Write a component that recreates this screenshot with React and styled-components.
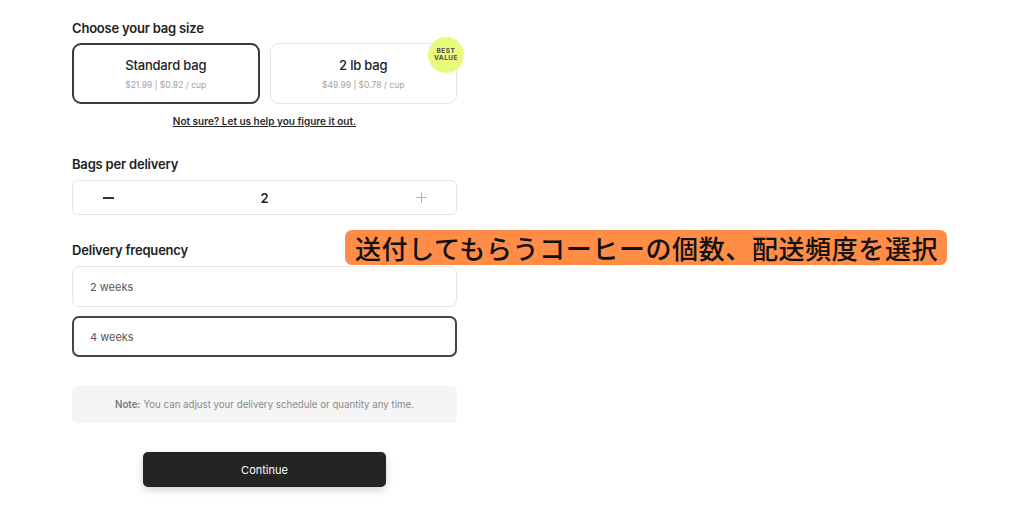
import React, { useState } from 'react'
import styled, { createGlobalStyle } from 'styled-components'

const GlobalStyle = createGlobalStyle`
    html, body {
        margin: 0;
        padding: 0;
        background: #fff;
    }
    body {
        font-family: Inter, "Noto Sans", sans-serif;
        color: #1f1f1f;
    }
`

const Page = styled.div`
    position: relative;
    width: 1024px;
    height: 507px;
    overflow: hidden;
`
const Form = styled.div`
    width: 385px;
    margin-left: 72px;
    padding-top: 19px;
    display: flex;
    flex-direction: column;
`
const Label = styled.div`
    font-size: 13px;
    line-height: 18px;
    font-weight: 600;
    letter-spacing: -0.2px;
    color: #222;
    margin-top: ${(props) => props.$top || 0}px;
    margin-bottom: ${(props) => props.$bottom || 7}px;
`
const SizeRow = styled.div`
    display: grid;
    grid-template-columns: 1fr 1fr;
    gap: 10px;
`
const SizeCard = styled.div`
    position: relative;
    box-sizing: border-box;
    height: 61px;
    border-radius: 9px;
    border: ${(props) => (props.$active ? '2px solid #3b3b3b' : '1px solid #e6e6e6')};
    display: flex;
    flex-direction: column;
    align-items: center;
    justify-content: center;
    gap: 6px;
    cursor: pointer;
`
const CardTitle = styled.div`
    font-size: 13px;
    font-weight: 500;
    letter-spacing: -0.2px;
    color: #222;
    line-height: 16px;
`
const CardPrice = styled.div`
    font-size: 8.5px;
    color: #a3a3a3;
    line-height: 12px;
`
const Badge = styled.div`
    position: absolute;
    top: -7px;
    right: -8px;
    width: 36px;
    height: 36px;
    border-radius: 50%;
    background: #eafa7c;
    display: flex;
    align-items: center;
    justify-content: center;
    text-align: center;
    font-size: 6.5px;
    line-height: 7.5px;
    font-weight: 700;
    letter-spacing: 0.5px;
    color: #4a4a4a;
`
const HelpLink = styled.a`
    align-self: center;
    margin-top: 10px;
    font-size: 10px;
    line-height: 14px;
    font-weight: 600;
    color: #2a2a2a;
    text-decoration: underline;
    cursor: pointer;
`
const Stepper = styled.div`
    box-sizing: border-box;
    height: 35px;
    border: 1px solid #e6e6e6;
    border-radius: 6px;
    display: grid;
    grid-template-columns: 70px 1fr 70px;
    align-items: center;
`
const StepButton = styled.button`
    border: none;
    background: none;
    padding: 0;
    height: 100%;
    display: flex;
    align-items: center;
    justify-content: center;
    cursor: pointer;
    color: ${(props) => (props.$muted ? '#b5b5b5' : '#333')};
`
const Count = styled.div`
    text-align: center;
    font-size: 13px;
    font-weight: 600;
    color: #222;
`
const Options = styled.div`
    display: flex;
    flex-direction: column;
    gap: 9px;
`
const Option = styled.div`
    box-sizing: border-box;
    height: 41px;
    border-radius: 7px;
    border: ${(props) => (props.$active ? '2px solid #454545' : '1px solid #e6e6e6')};
    padding-left: ${(props) => (props.$active ? 16 : 17)}px;
    display: flex;
    align-items: center;
    font-size: 11px;
    color: #555;
    cursor: pointer;
`
const Note = styled.div`
    margin-top: 29px;
    height: 37px;
    border-radius: 6px;
    background: #f5f5f5;
    display: flex;
    align-items: center;
    justify-content: center;
    font-size: 9.7px;
    color: #8a8a8a;

    b {
        font-weight: 600;
        color: #777;
        margin-right: 3px;
    }
`
const ContinueButton = styled.button`
    align-self: center;
    margin-top: 29px;
    width: 243px;
    height: 35px;
    border: none;
    border-radius: 5px;
    background: #242424;
    color: #fff;
    font-family: Inter, sans-serif;
    font-size: 11px;
    box-shadow: 0 3px 8px rgba(0, 0, 0, 0.18);
    cursor: pointer;
`
const Callout = styled.div`
    position: absolute;
    left: 345px;
    top: 230px;
    width: 602px;
    height: 35px;
    box-sizing: border-box;
    padding-left: 10px;
    border-radius: 7px;
    background: #ff8d48;
    display: flex;
    align-items: center;
    font-family: "Noto Sans CJK JP", sans-serif;
    font-size: 26px;
    font-weight: 500;
    letter-spacing: 0.6px;
    color: #111;
    white-space: nowrap;
`

const sizes = [
    { id: 'standard', title: 'Standard bag', price: '$21.99 | $0.92 / cup' },
    { id: 'large', title: '2 lb bag', price: '$49.99 | $0.78 / cup', badge: true },
]

const frequencies = ['2 weeks', '4 weeks']

function Minus() {
    return (
        <svg width="11" height="2" viewBox="0 0 11 2">
            <rect width="11" height="2" fill="currentColor" />
        </svg>
    )
}

function Plus() {
    return (
        <svg width="11" height="11" viewBox="0 0 11 11">
            <path d="M5.5 0v11M0 5.5h11" stroke="currentColor" strokeWidth="1" />
        </svg>
    )
}

export default function App() {
    const [size, setSize] = useState('standard')
    const [count, setCount] = useState(2)
    const [frequency, setFrequency] = useState('4 weeks')

    return (
        <Page>
            <GlobalStyle />
            <Form>
                <Label $bottom={6}>Choose your bag size</Label>
                <SizeRow>
                    {sizes.map((item) => (
                        <SizeCard
                            key={item.id}
                            $active={size === item.id}
                            onClick={() => setSize(item.id)}
                        >
                            <CardTitle>{item.title}</CardTitle>
                            <CardPrice>{item.price}</CardPrice>
                            {item.badge && (
                                <Badge>
                                    BEST
                                    <br />
                                    VALUE
                                </Badge>
                            )}
                        </SizeCard>
                    ))}
                </SizeRow>
                <HelpLink>Not sure? Let us help you figure it out.</HelpLink>

                <Label $top={27}>Bags per delivery</Label>
                <Stepper>
                    <StepButton onClick={() => setCount(Math.max(1, count - 1))}>
                        <Minus />
                    </StepButton>
                    <Count>{count}</Count>
                    <StepButton $muted onClick={() => setCount(count + 1)}>
                        <Plus />
                    </StepButton>
                </Stepper>

                <Label $top={26}>Delivery frequency</Label>
                <Options>
                    {frequencies.map((f) => (
                        <Option
                            key={f}
                            $active={frequency === f}
                            onClick={() => setFrequency(f)}
                        >
                            {f}
                        </Option>
                    ))}
                </Options>

                <Note>
                    <b>Note:</b> You can adjust your delivery schedule or quantity any time.
                </Note>

                <ContinueButton>Continue</ContinueButton>
            </Form>

            <Callout>送付してもらうコーヒーの個数、配送頻度を選択</Callout>
        </Page>
    )
}
